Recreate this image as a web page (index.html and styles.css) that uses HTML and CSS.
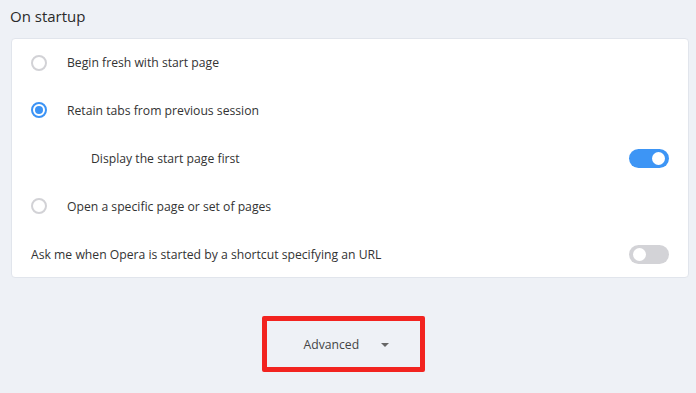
FILE: index.html
```html
<!DOCTYPE html>
<html lang="en">
<head>
  <meta charset="UTF-8" />
  <title>Settings - On startup</title>
  <link rel="stylesheet" href="styles.css">
</head>
<body>
  <h2 class="section-title">On startup</h2>

  <div class="card">
    <div class="row">
      <span class="radio"></span>
      <span class="label">Begin fresh with start page</span>
    </div>
    <div class="row">
      <span class="radio checked"></span>
      <span class="label">Retain tabs from previous session</span>
    </div>
    <div class="row sub">
      <span class="label">Display the start page first</span>
      <span class="toggle on"></span>
    </div>
    <div class="row">
      <span class="radio"></span>
      <span class="label">Open a specific page or set of pages</span>
    </div>
    <div class="row plain">
      <span class="label">Ask me when Opera is started by a shortcut specifying an URL</span>
      <span class="toggle"></span>
    </div>
  </div>

  <div class="advanced-wrap">
    <div class="advanced">
      <span>Advanced</span>
      <span class="caret"></span>
    </div>
  </div>
</body>
</html>
```

FILE: styles.css
```css
body {
  margin: 0;
  padding: 0 7px 0 11px;
  background: #eef1f6;
  font-family: "Segoe UI", "Open Sans", "Noto Sans", sans-serif;
  color: #262626;
}
.section-title {
  margin: 0 0 0 -1px;
  padding-top: 6px;
  height: 32px;
  font-size: 15px;
  font-weight: 500;
  color: #2a2a2a;
}
.card {
  background: #fff;
  border: 1px solid #e1e5ec;
  border-radius: 4px;
  height: 240px;
  box-sizing: border-box;
}
.row {
  height: 48px;
  display: flex;
  align-items: center;
  padding: 0 19px 0 20px;
  font-size: 12.2px;
  color: #333;
}
.row:first-child {
  height: 47px;
}
.row.sub {
  padding-left: 79px;
}
.row.plain {
  padding-left: 19px;
}
.label {
  flex: 1;
}
.radio {
  box-sizing: border-box;
  width: 16px;
  height: 16px;
  border: 2px solid #d2d2d6;
  border-radius: 50%;
  margin-right: 20px;
  margin-left: -1px;
  flex: none;
  position: relative;
}
.radio.checked {
  border-color: #3b93f5;
}
.radio.checked::after {
  content: "";
  position: absolute;
  left: 2px;
  top: 2px;
  width: 8px;
  height: 8px;
  border-radius: 50%;
  background: #3b93f5;
}
.toggle {
  width: 40px;
  height: 19px;
  border-radius: 10px;
  background: #d3d3d7;
  flex: none;
  position: relative;
}
.toggle::after {
  content: "";
  position: absolute;
  top: 3px;
  left: 4px;
  width: 13px;
  height: 13px;
  border-radius: 50%;
  background: #fff;
}
.toggle.on {
  background: #3d95f5;
}
.toggle.on::after {
  left: auto;
  right: 4px;
}
.advanced-wrap {
  display: flex;
  justify-content: center;
  padding-top: 38px;
  padding-right: 14px;
}
.advanced {
  box-sizing: border-box;
  width: 163px;
  height: 56px;
  border: 5px solid #f2231f;
  border-radius: 2px;
  display: flex;
  align-items: center;
  gap: 22px;
  font-size: 12.2px;
  color: #444;
  padding-left: 37px;
}
.caret {
  width: 0;
  height: 0;
  border-left: 4px solid transparent;
  border-right: 4px solid transparent;
  border-top: 4px solid #666;
  margin-top: 1px;
}
```
